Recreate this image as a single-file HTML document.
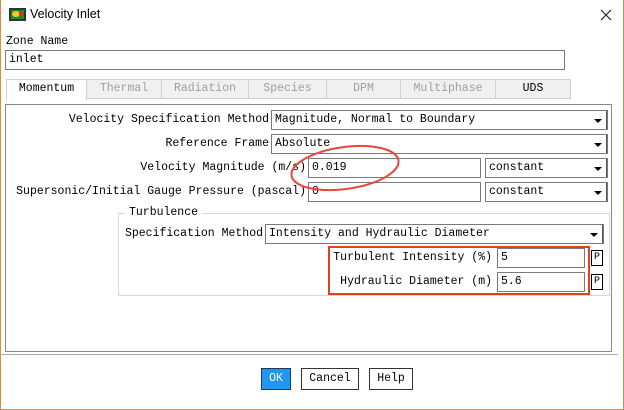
<!DOCTYPE html>
<html><head><meta charset="utf-8"><style>
*{box-sizing:border-box;margin:0;padding:0}
body{width:624px;height:410px;background:#fff;position:relative;overflow:hidden;font-family:"Liberation Mono","Noto Sans CJK SC",monospace;font-size:11.5px;color:#000}
.a{position:absolute;white-space:nowrap}
.win{position:absolute;left:0;top:0;width:624px;height:410px;border:1px solid #e08a3c;border-top:none}
.inp{position:absolute;border:1px solid #7a7a7a;background:#fff;padding-left:3px;line-height:18px;height:20px}
.dd{position:absolute;border:1px solid #7a7a7a;background:#fff;padding-left:3px;line-height:18px;height:20px}
.dd:after{content:"";position:absolute;right:5px;top:8px;border-left:4px solid transparent;border-right:4px solid transparent;border-top:4px solid #000}
.dd i{position:absolute;right:0;top:0;width:1px;height:18px;background:#555}
.lbl{position:absolute;text-align:right;line-height:20px;white-space:nowrap}
.tab{position:absolute;top:79px;height:20px;border:1px solid #d0d0d0;background:#f0f0f0;color:#a0a0a0;text-align:center;line-height:18px}
.btn{position:absolute;top:368px;height:22px;border:1px solid #333;background:#fff;text-align:center;line-height:20px}
.p{position:absolute;left:591px;width:12px;height:16px;border:1px solid #000;font-size:10px;line-height:14px;text-align:center}
</style></head><body>
<div class="win"></div>
<svg class="a" style="left:9px;top:8px" width="17" height="13"><rect x="0" y="0" width="17" height="13" fill="#333"/><rect x="2" y="2" width="13" height="9" fill="#1a8f2a"/><ellipse cx="7" cy="6" rx="4" ry="3" fill="#e8d020"/><rect x="10" y="4" width="4" height="4" fill="#e03020"/></svg>
<div class="a" style="left:30px;top:7px;font-family:'Liberation Sans',sans-serif;font-size:12.5px">Velocity Inlet</div>
<svg class="a" style="left:600px;top:9px" width="12" height="12"><path d="M1 1L11 11M11 1L1 11" stroke="#222" stroke-width="1.2"/></svg>
<div class="a" style="left:6px;top:35px">Zone Name</div>
<div class="inp" style="left:5px;top:50px;width:560px">inlet</div>
<div class="tab" style="left:6px;width:81px;background:#fff;color:#000;height:21px;border-bottom:none">Momentum</div>
<div class="tab" style="left:86px;width:76px">Thermal</div>
<div class="tab" style="left:161px;width:88px">Radiation</div>
<div class="tab" style="left:248px;width:79px">Species</div>
<div class="tab" style="left:326px;width:75px">DPM</div>
<div class="tab" style="left:400px;width:96px">Multiphase</div>
<div class="tab" style="left:495px;width:76px;color:#000">UDS</div>
<div class="a" style="left:5px;top:104px;width:607px;height:248px;border:1px solid #888"></div>
<div class="a" style="left:0;top:354px;width:618px;height:1px;background:#aaa"></div>
<div class="lbl" style="right:355px;top:110px">Velocity Specification Method</div>
<div class="dd" style="left:271px;top:110px;width:337px">Magnitude, Normal to Boundary<i></i></div>
<div class="lbl" style="right:355px;top:134px">Reference Frame</div>
<div class="dd" style="left:271px;top:134px;width:337px">Absolute<i></i></div>
<div class="lbl" style="right:318px;top:158px">Velocity Magnitude (m/s)</div>
<div class="inp" style="left:308px;top:158px;width:173px">0.019</div>
<div class="dd" style="left:485px;top:158px;width:123px">constant<i></i></div>
<div class="lbl" style="right:318px;top:182px">Supersonic/Initial Gauge Pressure (pascal)</div>
<div class="inp" style="left:308px;top:182px;width:173px">0</div>
<div class="dd" style="left:485px;top:182px;width:123px">constant<i></i></div>
<div class="a" style="left:118px;top:213px;width:492px;height:83px;border:1px solid #d8d8d8"></div>
<div class="a" style="left:125px;top:205px;background:#fff;padding:0 4px;line-height:16px">Turbulence</div>
<div class="lbl" style="right:361px;top:224px">Specification Method</div>
<div class="dd" style="left:265px;top:224px;width:339px">Intensity and Hydraulic Diameter<i></i></div>
<div class="a" style="left:328px;top:246px;width:262px;height:49px;border:2px solid #e0401c"></div>
<div class="lbl" style="right:132px;top:248px">Turbulent Intensity (%)</div>
<div class="inp" style="left:497px;top:248px;width:88px">5</div>
<div class="p" style="top:250px">P</div>
<div class="lbl" style="right:132px;top:272px">Hydraulic Diameter (m)</div>
<div class="inp" style="left:497px;top:272px;width:88px">5.6</div>
<div class="p" style="top:274px">P</div>
<svg class="a" style="left:280px;top:140px" width="150" height="60"><ellipse cx="65" cy="28" rx="54" ry="21" transform="rotate(-8 65 28)" fill="none" stroke="#e8473a" stroke-width="2"/></svg>
<div class="btn" style="left:261px;width:30px;background:#2196f3;color:#fff;border-color:#1a3a5a">OK</div>
<div class="btn" style="left:301px;width:58px">Cancel</div>
<div class="btn" style="left:369px;width:44px">Help</div>
</body></html>
